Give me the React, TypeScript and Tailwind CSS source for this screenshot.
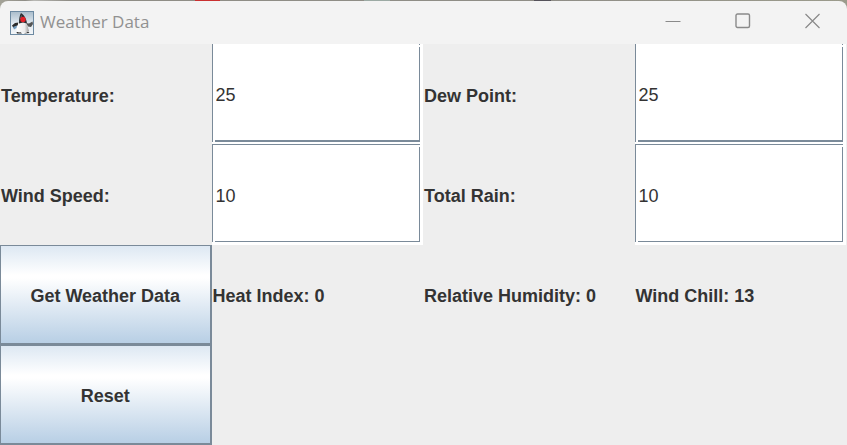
import { useState } from "react";

function DukeIcon() {
  return (
    <svg viewBox="0 0 24 24" className="h-6 w-6 shrink-0" aria-hidden="true">
      <defs>
        <linearGradient id="tile" x1="0" y1="0" x2="0" y2="1">
          <stop offset="0" stopColor="#a9bccb" />
          <stop offset="0.5" stopColor="#dfe8ef" />
          <stop offset="1" stopColor="#f4f6f8" />
        </linearGradient>
        <linearGradient id="belly" x1="0" y1="0" x2="1" y2="0">
          <stop offset="0" stopColor="#ffffff" />
          <stop offset="0.65" stopColor="#ececec" />
          <stop offset="1" stopColor="#9a9a9a" />
        </linearGradient>
      </defs>
      <rect x="0.5" y="0.5" width="23" height="23" fill="url(#tile)" stroke="#6d8aa2" />
      <path d="M2 14.500 L5 12 L8.500 11.500 L8 14.500 L5 15.500 L3.500 17 Z" fill="#2b2b2b" />
      <path d="M16 12 L19 12.500 L22.500 10.500 L23 13 L21 16 L18 15.500 Z" fill="#555" />
      <path d="M3 16 L7 14.500 L6.500 17 L4 18.500 Z" fill="#6f98ba" />
      <path d="M6.500 21 L10 20.500 L12 22.500 L7 22.500 Z M14 22.500 L18 20.500 L19.500 22 Z" fill="#333" />
      <path d="M9 10.500 L7 16 L6.500 20.500 L9 21.500 L12 21 L16 22 L19 20 L17.500 15 L16 10.500 Z" fill="url(#belly)" />
      <path d="M11 2 C13.500 3.500 16.500 7 17 12.500 L13 11.500 L9 12.500 C9 8 9.500 4.500 11 2 Z" fill="#2b2d31" />
      <path d="M11.500 4.500 L10.500 8" stroke="#777" strokeWidth="0.800" />
      <circle cx="13" cy="8.500" r="2.700" fill="#e5222a" />
    </svg>
  );
}

function TitleBar() {
  return (
    <header className="flex h-[43px] shrink-0 items-center rounded-t-lg bg-[#f3f3f3] pr-2.5 pl-2.5">
      <DukeIcon />
      <h1 className="mb-0.5 ml-1.5 flex-1 font-['Open_Sans','Noto_Sans',sans-serif] text-[17px] leading-6 text-[#919191]">
        Weather Data
      </h1>
      <div className="mb-1 flex gap-[22px] text-[#8a8a8a]">
        <button type="button" aria-label="Minimize" className="flex h-8 w-12 items-center justify-center">
          <svg viewBox="0 0 16 16" className="h-4 w-4" fill="none" stroke="currentColor">
            <path d="M0.500 8.500 H15.500" />
          </svg>
        </button>
        <button type="button" aria-label="Maximize" className="flex h-8 w-12 items-center justify-center">
          <svg viewBox="0 0 16 16" className="h-4 w-4" fill="none" stroke="currentColor" strokeWidth="1.400">
            <rect x="1" y="1" width="13.500" height="13.500" rx="1.500" />
          </svg>
        </button>
        <button type="button" aria-label="Close" className="flex h-8 w-12 items-center justify-center">
          <svg viewBox="0 0 16 16" className="h-4 w-4" fill="none" stroke="currentColor" strokeWidth="1.200">
            <path d="M0.500 1 L14.500 15 M14.500 1 L0.500 15" />
          </svg>
        </button>
      </div>
    </header>
  );
}

type FieldProps = {
  id: string;
  label: string;
  value: string;
  onChange: (value: string) => void;
  top?: boolean;
};

function Field({ id, label, value, onChange, top = false }: FieldProps) {
  return (
    <>
      <label htmlFor={id} className="flex items-center pt-[3px] pl-px font-bold">
        {label}
      </label>
      <div className={top ? "relative flex bg-white pr-[3px] pb-0.5" : "relative flex bg-white pr-[3px] pb-[3px]"}>
        <input
          id={id}
          type="text"
          value={value}
          onChange={(event) => onChange(event.target.value)}
          className={
            top
              ? "w-full min-w-0 border-r border-b-2 border-l border-[#7a8a99] bg-white pt-1.5 pl-[3px] outline-none"
              : "w-full min-w-0 border border-[#7a8a99] bg-white pt-1.5 pl-[3px] outline-none"
          }
        />
        <span className="absolute top-px right-[3px] h-0.5 w-px bg-white" />
        <span className="absolute bottom-0.5 left-px h-1 w-0.5 bg-white" />
      </div>
    </>
  );
}

function MetalButton({ children, onClick }: { children: string; onClick?: () => void }) {
  return (
    <button
      type="button"
      onClick={onClick}
      className="border-t border-r-2 border-b-2 border-l border-[#7a8a99] bg-[linear-gradient(to_bottom,#dde8f3_0%,#ffffff_30%,#ffffff_33%,#b8cfe5_100%)] pt-1 font-bold"
    >
      {children}
    </button>
  );
}

export default function App() {
  const [temperature, setTemperature] = useState("25");
  const [dewPoint, setDewPoint] = useState("25");
  const [windSpeed, setWindSpeed] = useState("10");
  const [rain, setRain] = useState("10");

  const reset = () => {
    setTemperature("");
    setDewPoint("");
    setWindSpeed("");
    setRain("");
  };

  return (
    <div className="flex min-h-screen flex-col bg-[linear-gradient(to_right,#a3a297_0%,#8f8d86_3%,#b9b9b5_4%,#8f8d86_8%,#8f8d86_23%,#c93030_23%,#c93030_26%,#8f8d86_26%,#8f8d86_43%,#9caaa4_43%,#9caaa4_46%,#8f8d86_46%,#8f8d86_63%,#55525a_63%,#55525a_65%,#8f8d86_65%,#9b9b8c_100%)] pt-px font-['Liberation_Sans',Arial,sans-serif] text-lg text-[#333333]">
      <TitleBar />
      <main className="grid flex-1 auto-rows-fr grid-cols-4 bg-[#eeeeee] pr-px">
        <Field id="temperature" label="Temperature:" value={temperature} onChange={setTemperature} top />
        <Field id="dew-point" label="Dew Point:" value={dewPoint} onChange={setDewPoint} top />
        <Field id="wind-speed" label="Wind Speed:" value={windSpeed} onChange={setWindSpeed} />
        <Field id="total-rain" label="Total Rain:" value={rain} onChange={setRain} />
        <MetalButton onClick={() => undefined}>Get Weather Data</MetalButton>
        <output className="flex items-center pt-0.5 pl-px font-bold">Heat Index: 0</output>
        <output className="flex items-center pt-0.5 pl-px font-bold">Relative Humidity: 0</output>
        <output className="flex items-center pt-0.5 pl-px font-bold">Wind Chill: 13</output>
        <MetalButton onClick={reset}>Reset</MetalButton>
      </main>
    </div>
  );
}
